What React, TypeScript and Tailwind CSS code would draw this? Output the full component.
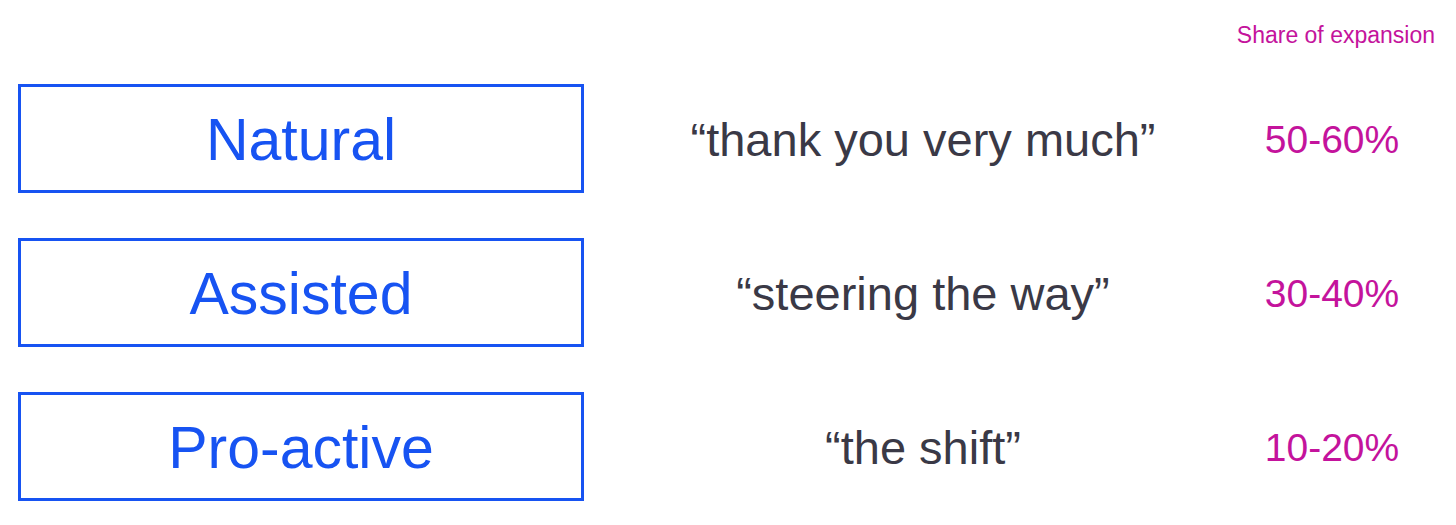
const rows = [
  { label: 'Natural', quote: '“thank you very much”', share: '50-60%' },
  { label: 'Assisted', quote: '“steering the way”', share: '30-40%' },
  { label: 'Pro-active', quote: '“the shift”', share: '10-20%' },
];

export default function App() {
  return (
    <div
      className="w-[1456px] h-[525px] bg-white overflow-hidden"
      style={{ fontFamily: '"Liberation Sans", Arial, sans-serif' }}
    >
      {/* Header */}
      <div className="flex justify-end pr-[21px] pt-[20px] h-[84px]">
        <span className="text-[23px] leading-[30px] text-[#c4139c]">Share of expansion</span>
      </div>

      {/* Rows */}
      <div className="flex flex-col gap-[45px] pl-[18px]">
        {rows.map((row) => (
          <div key={row.label} className="flex items-center">
            <div className="w-[566px] h-[109px] border-[3px] border-[#1753f2] flex items-center justify-center pt-[4px]">
              <span className="text-[59px] leading-none text-[#1753f2]">{row.label}</span>
            </div>
            <div className="w-[678px] text-center text-[47px] leading-none text-[#3a3946] pt-[2px]">
              {row.quote}
            </div>
            <div className="w-[140px] text-center text-[39px] leading-none text-[#c4139c] pt-[2px]">
              {row.share}
            </div>
          </div>
        ))}
      </div>
    </div>
  );
}
